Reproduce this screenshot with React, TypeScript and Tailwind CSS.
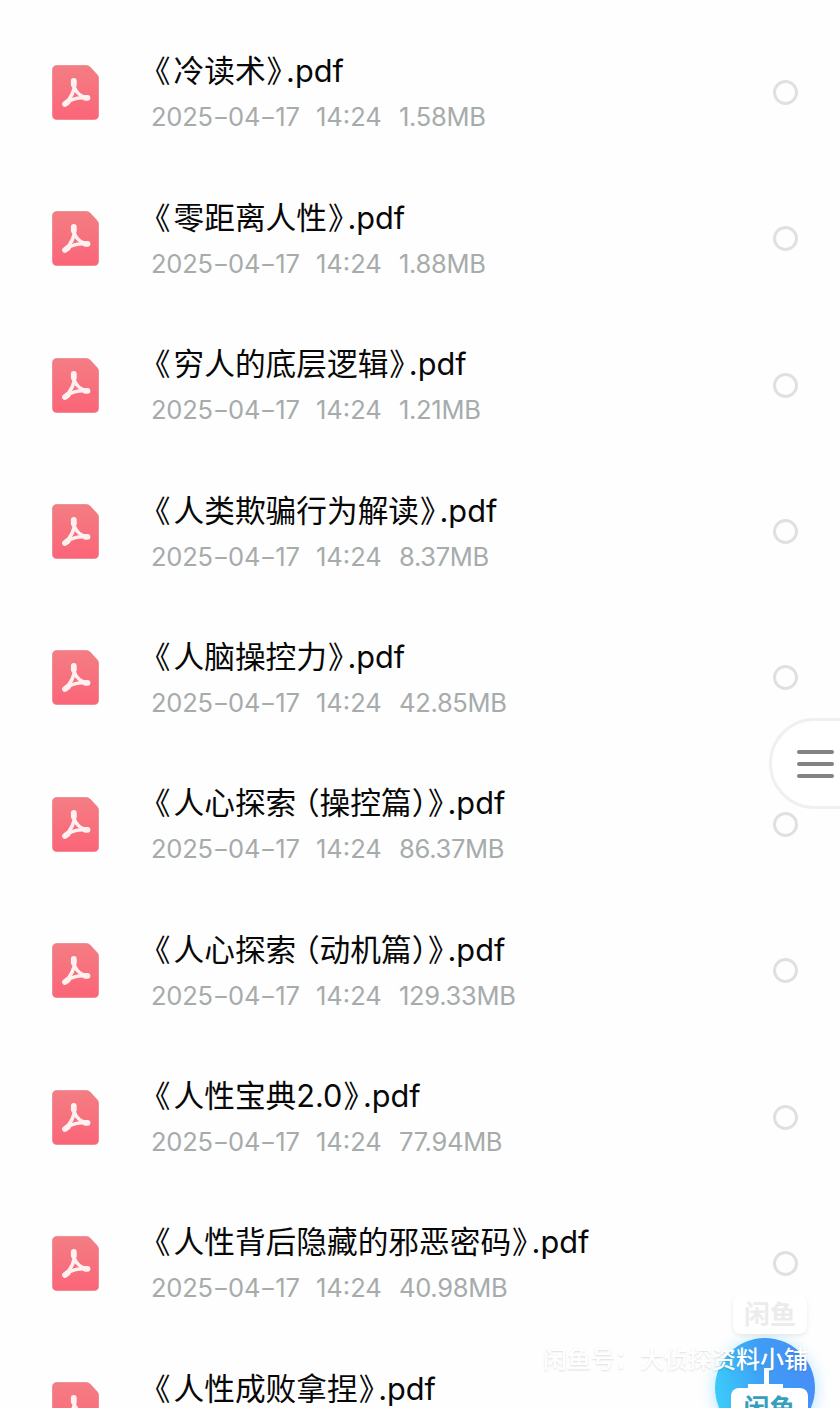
import React from 'react';

interface FileItem {
  name: string;
  size?: string;
}

const FILES: FileItem[] = [
  { name: '冷读术', size: '1.58MB' },
  { name: '零距离人性', size: '1.88MB' },
  { name: '穷人的底层逻辑', size: '1.21MB' },
  { name: '人类欺骗行为解读', size: '8.37MB' },
  { name: '人脑操控力', size: '42.85MB' },
  { name: '人心探索（操控篇）', size: '86.37MB' },
  { name: '人心探索（动机篇）', size: '129.33MB' },
  { name: '人性宝典2.0', size: '77.94MB' },
  { name: '人性背后隐藏的邪恶密码', size: '40.98MB' },
  { name: '人性成败拿捏' },
];

const PdfIcon: React.FC = () => (
  <svg width="47" height="55" viewBox="0 0 47 55" className="ml-[51.5px] shrink-0">
    <defs>
      <linearGradient id="pdf" x1="0" y1="0" x2="0" y2="1">
        <stop offset="0" stopColor="#f47d83" />
        <stop offset="1" stopColor="#fb6578" />
      </linearGradient>
    </defs>
    <path d="M5 .5H34.5Q36.5 .5 38 2L45 9.5Q46.5 11 46.5 13V50Q46.5 54.5 42 54.5H5Q.5 54.5 .5 50V5Q.5 .5 5 .5Z" fill="url(#pdf)" stroke="#e3757c" strokeWidth=".6" />
    <g fill="none" stroke="#fff1ef" strokeLinecap="round" strokeLinejoin="round">
      <path d="M22 17Q21.5 23 25 27Q29 32 36 32.5" strokeWidth="3.6" />
      <path d="M22.5 19Q22.5 29 13.5 38.5" strokeWidth="3.6" />
      <path d="M15.5 37Q23 32 34 32.8" strokeWidth="3.6" />
      <path d="M21.8 15.8V19.5M33.5 32.8H35.5M13 39L15.5 37.2" strokeWidth="5.8" />
    </g>
  </svg>
);

const renderName = (name: string) =>
  name.split(/([（）])/).filter(Boolean).map((part, i) => {
    if (part === '（') return <span key={i} className="ml-[8px]">{part}</span>;
    return <span key={i}>{part}</span>;
  });

const renderDate = (date: string) =>
  date.split(/(-)/).map((part, i) =>
    part === '-' ? (
      <span key={i} className="mx-[1.8px] inline-block scale-x-140">-</span>
    ) : (
      <span key={i}>{part}</span>
    ),
  );

const FileRow: React.FC<{ file: FileItem }> = ({ file }) => (
  <li className="flex h-[146.375px] shrink-0 items-center">
    <PdfIcon />
    <div className="ml-[52.5px] flex-1 pt-[4px] whitespace-nowrap">
      <div className="flex h-[46px] items-center font-['Inter','Noto_Sans_CJK_SC',sans-serif] text-[30.7px] leading-[46px] text-[#080808] [font-feature-settings:'halt']">
        <span className="ml-[4px] w-[18.5px]">《</span>
        {renderName(file.name)}
        <span className="ml-px w-[18.5px]">》</span>
        <span className="ml-px text-[30.7px]">.pdf</span>
      </div>
      <div className="flex h-[46px] items-center font-['Inter',sans-serif] text-[25.5px] leading-[46px] text-[#a6abac]">
        {file.size && (
          <>
            <span className="w-[165px] tracking-[-0.2px]">{renderDate('2025-04-17')}</span>
            <span className="w-[83px]">14:24</span>
            <span className="tracking-[-0.3px]">{file.size}</span>
          </>
        )}
      </div>
    </div>
    <span className="mr-[42px] size-[25px] shrink-0 rounded-full border-3 border-[#e0e0e0]" />
  </li>
);

const MenuHandle: React.FC = () => (
  <button className="absolute top-[718px] left-[769px] flex h-[91px] w-[90px] flex-col justify-center gap-[7.5px] rounded-l-full border-[3px] border-[#f0f0f0] bg-white pt-px pl-[25px]">
    <span className="h-[4.5px] w-[37px] rounded-full bg-[#828282]" />
    <span className="h-[4.5px] w-[37px] rounded-full bg-[#828282]" />
    <span className="h-[4.5px] w-[37px] rounded-full bg-[#828282]" />
  </button>
);

const Watermark: React.FC = () => (
  <div className="absolute top-[1280px] left-[530px] h-[128px] w-[310px] overflow-hidden font-['Noto_Sans_CJK_SC',sans-serif]">
    <div className="absolute top-[58px] left-[185px] size-[100px] rounded-full bg-linear-[75deg,#3bd5fb,#3e9cf5_55%,#4a8af8] shadow-[0_2px_16px_rgba(60,190,250,0.4)]" />
    <div className="absolute top-[88px] left-[234px] h-[20px] w-[5px] bg-white" />
    <div className="absolute top-[104px] left-[218px] h-[5px] w-[35px] bg-white" />
    <div className="absolute top-[108px] left-[201px] h-[40px] w-[77px] rounded-[8px] bg-white text-center text-[26px] leading-[38px] font-bold text-[#369fc0]">闲鱼</div>
    <div className="absolute top-[15px] left-[203px] h-[39px] w-[74px] rounded-[8px] bg-white text-center text-[26px] leading-[36px] font-bold text-[#ececec] shadow-[0_2px_4px_rgba(0,0,0,0.08)]">闲鱼</div>
    <div className="absolute top-[60px] left-[13px] flex text-[24px] leading-[36px] font-medium whitespace-nowrap text-white [text-shadow:0_1px_2px_rgba(0,0,0,0.13)]">
      <span className="w-[97px]">闲鱼号：</span>
      <span>大侦探资料小铺</span>
    </div>
  </div>
);

export default function App() {
  return (
    <main className="relative h-[1408px] w-[840px] overflow-hidden bg-[#fefefe] pt-[19.3px]">
      <ul>
        {FILES.map((file) => (
          <FileRow key={file.name} file={file} />
        ))}
      </ul>
      <MenuHandle />
      <Watermark />
    </main>
  );
}
